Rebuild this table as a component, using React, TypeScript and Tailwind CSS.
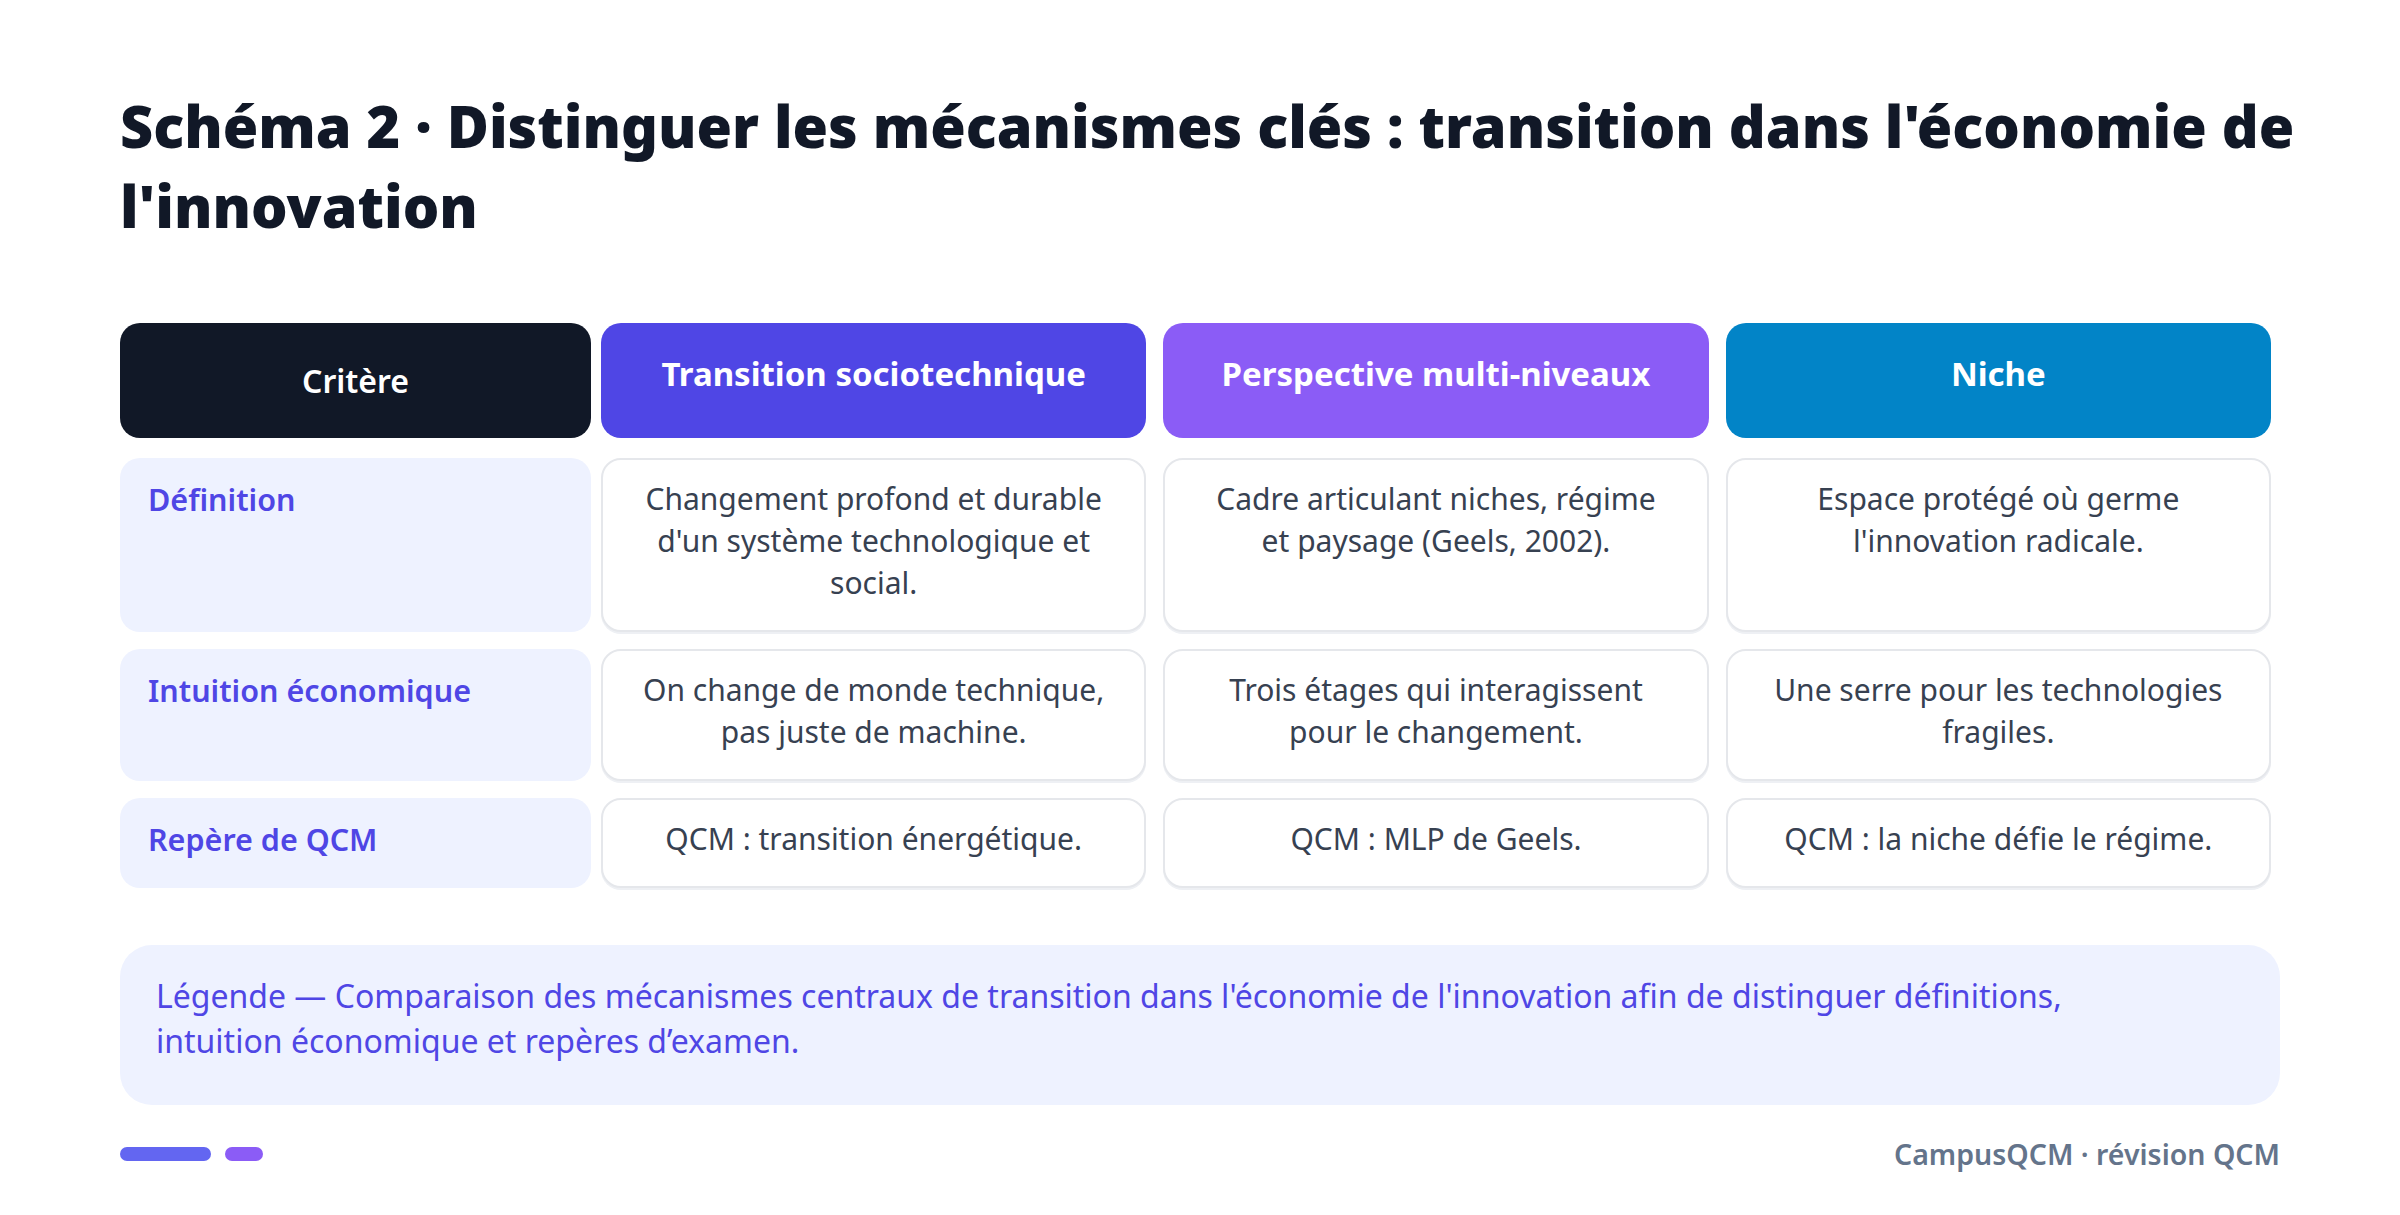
const rows = [
  {
    label: 'Définition',
    cells: [
      "Changement profond et durable d'un système technologique et social.",
      'Cadre articulant niches, régime et paysage (Geels, 2002).',
      "Espace protégé où germe l'innovation radicale.",
    ],
  },
  {
    label: 'Intuition économique',
    cells: [
      'On change de monde technique, pas juste de machine.',
      'Trois étages qui interagissent pour le changement.',
      'Une serre pour les technologies fragiles.',
    ],
  },
  {
    label: 'Repère de QCM',
    cells: [
      'QCM : transition énergétique.',
      'QCM : MLP de Geels.',
      'QCM : la niche défie le régime.',
    ],
  },
];

const headers = [
  { title: 'Transition sociotechnique', color: 'bg-[#4f46e5]' },
  { title: 'Perspective multi-niveaux', color: 'bg-[#8b5cf6]' },
  { title: 'Niche', color: 'bg-[#0284c7]' },
];

function App() {
  return (
    <div
      className="min-h-screen bg-white px-[120px] pt-[86px]"
      style={{ fontFamily: '"Segoe UI", "Noto Sans", sans-serif' }}
    >
      <h1 className="mr-[-16px] text-[57.5px] font-black leading-[80px] text-[#111827]">
        Schéma 2 · Distinguer les mécanismes clés : transition dans l'économie
        de l'innovation
      </h1>

      <div className="mt-[77px] w-[2151px]">
        <div className="flex h-[115px]">
          <div className="flex w-[471px] items-center justify-center rounded-[20px] bg-[#111827] text-[32px] font-semibold text-white">
            Critère
          </div>
          <div className="ml-[10px] grid flex-1 grid-cols-3 gap-x-[17px]">
            {headers.map((h) => (
              <div
                key={h.title}
                className={`${h.color} rounded-[20px] pt-[27px] text-center text-[33px] font-bold leading-[48px] text-white`}
              >
                {h.title}
              </div>
            ))}
          </div>
        </div>

        <div className="mt-[20px] flex flex-col gap-[17px]">
          {rows.map((row) => (
            <div key={row.label} className="flex">
              <div className="w-[471px] rounded-[20px] bg-[#eef2ff] px-[28px] pt-[20px] text-[30.5px] font-semibold leading-[42px] text-[#4f46e5]">
                {row.label}
              </div>
              <div className="ml-[10px] grid flex-1 grid-cols-3 gap-x-[17px]">
                {row.cells.map((c) => (
                  <div
                    key={c}
                    className="rounded-[20px] border-2 border-[#e5e7eb] bg-white px-[36px] pb-[26px] pt-[18px] text-center text-[30px] leading-[42px] text-[#374151] shadow-[0_2px_0_#eef0f4]"
                  >
                    {c}
                  </div>
                ))}
              </div>
            </div>
          ))}
        </div>
      </div>

      <div className="mt-[57px] rounded-[32px] bg-[#eef2ff] px-[36px] pb-[42px] pt-[28px] text-[32px] leading-[45px] text-[#4f46e5]">
        <p className="max-w-[1960px]">
          Légende — Comparaison des mécanismes centraux de transition dans
          l'économie de l'innovation afin de distinguer définitions, intuition
          économique et repères d’examen.
        </p>
      </div>

      <div className="mt-[28px] flex items-center justify-between">
        <div className="flex gap-[14px]">
          <div className="h-[14px] w-[91px] rounded-full bg-[#6366f1]" />
          <div className="h-[14px] w-[38px] rounded-full bg-[#8b5cf6]" />
        </div>
        <div className="text-[28.5px] font-semibold text-[#64748b]">
          CampusQCM · révision QCM
        </div>
      </div>
    </div>
  );
}

export default App;
